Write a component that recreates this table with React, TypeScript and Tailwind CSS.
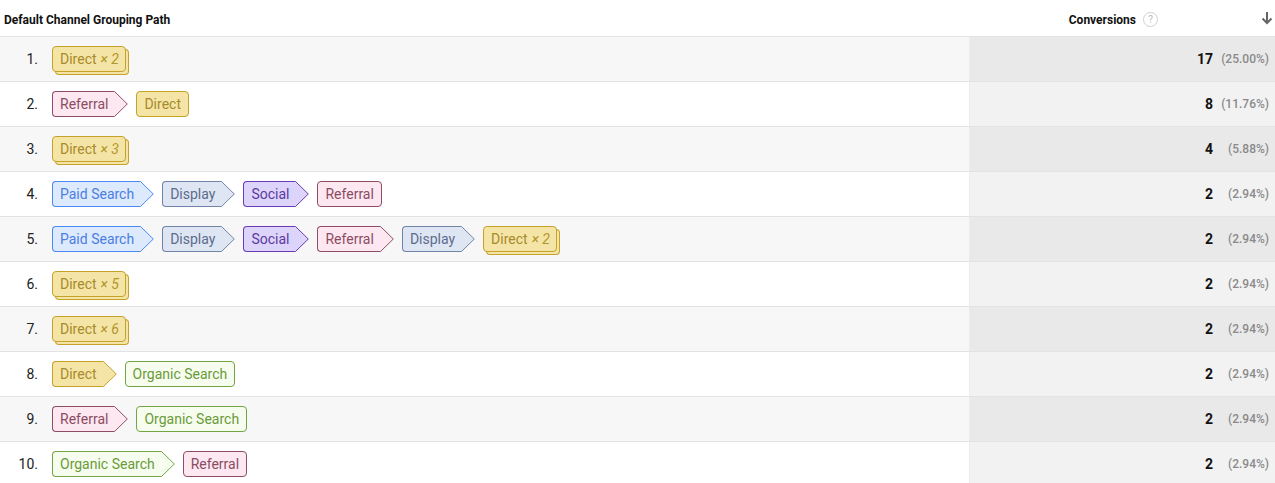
import React from "react";

type Kind = "direct" | "referral" | "paid" | "display" | "social" | "organic";

const STY: Record<Kind, { label: string; bg: string; bd: string; body: string }> = {
  direct: { label: "Direct", bg: "#f4e5a7", bd: "#c6a22a", body: "bg-[#f4e5a7] border-[#c6a22a] text-[#a88a2a]" },
  referral: { label: "Referral", bg: "#fde8f1", bd: "#8e4d65", body: "bg-[#fde8f1] border-[#8e4d65] text-[#8b4c63]" },
  paid: { label: "Paid Search", bg: "#dde9fd", bd: "#4a8af4", body: "bg-[#dde9fd] border-[#4a8af4] text-[#4a7fe0]" },
  display: { label: "Display", bg: "#dfe6f3", bd: "#7283a8", body: "bg-[#dfe6f3] border-[#7283a8] text-[#5b6c8e]" },
  social: { label: "Social", bg: "#ddd4fb", bd: "#6b3bb5", body: "bg-[#ddd4fb] border-[#6b3bb5] text-[#5c3a9d]" },
  organic: { label: "Organic Search", bg: "#f6fdee", bd: "#73a544", body: "bg-[#f6fdee] border-[#73a544] text-[#6a9a3a]" },
};

function Chip({ kind, arrow, count }: { kind: Kind; arrow: boolean; count?: number }) {
  const s = STY[kind];
  if (count) {
    return (
      <div
        className={`h-[26px] flex items-center border rounded-[4px] pl-[7px] pr-[6px] leading-[24px] ${s.body} shadow-[3px_3px_0_-1px_#f4e5a7,3px_3px_0_0_#c6a22a] mr-[3px]`}
      >
        <span>{s.label}</span>
        <span className="italic ml-[4px] text-[#b3952c]">× {count}</span>
      </div>
    );
  }
  if (!arrow) {
    return (
      <div className={`h-[26px] flex items-center border rounded-[4px] px-[7px] leading-[24px] ${s.body}`}>
        {s.label}
      </div>
    );
  }
  return (
    <div className="flex h-[26px]">
      <div className={`h-[26px] flex items-center border-y border-l rounded-l-[4px] pl-[7px] pr-[5px] leading-[24px] ${s.body}`}>
        {s.label}
      </div>
      <svg width="15" height="26" viewBox="0 0 15 26" className="block">
        <path d="M0 0.5 L1.5 0.5 L14.3 13 L1.5 25.5 L0 25.5 Z" fill={s.bg} />
        <polyline points="0,0.5 1.5,0.5 14.3,13 1.5,25.5 0,25.5" fill="none" stroke={s.bd} strokeWidth="1" />
      </svg>
    </div>
  );
}

type Step = { k: Kind; n?: number };
const rows: { path: Step[]; conv: string; pct: string }[] = [
  { path: [{ k: "direct", n: 2 }], conv: "17", pct: "(25.00%)" },
  { path: [{ k: "referral" }, { k: "direct" }], conv: "8", pct: "(11.76%)" },
  { path: [{ k: "direct", n: 3 }], conv: "4", pct: "(5.88%)" },
  { path: [{ k: "paid" }, { k: "display" }, { k: "social" }, { k: "referral" }], conv: "2", pct: "(2.94%)" },
  {
    path: [{ k: "paid" }, { k: "display" }, { k: "social" }, { k: "referral" }, { k: "display" }, { k: "direct", n: 2 }],
    conv: "2",
    pct: "(2.94%)",
  },
  { path: [{ k: "direct", n: 5 }], conv: "2", pct: "(2.94%)" },
  { path: [{ k: "direct", n: 6 }], conv: "2", pct: "(2.94%)" },
  { path: [{ k: "direct" }, { k: "organic" }], conv: "2", pct: "(2.94%)" },
  { path: [{ k: "referral" }, { k: "organic" }], conv: "2", pct: "(2.94%)" },
  { path: [{ k: "organic" }, { k: "referral" }], conv: "2", pct: "(2.94%)" },
];

export default function App() {
  return (
    <div className="w-[1275px] h-[483px] overflow-hidden bg-white text-[#222] font-['Roboto',_'Liberation_Sans',_sans-serif]">
      {/* header */}
      <div className="flex h-[37px] border-b border-[#e3e3e3] pt-[3px]">
        <div className="flex-1 flex items-center pl-[4px] text-[12px] font-bold text-[#111]">
          Default Channel Grouping Path
        </div>
        <div className="w-[306px] flex items-center justify-end text-[12px] font-bold text-[#111]">
          <span>Conversions</span>
          <span className="ml-[7px] w-[15px] h-[15px] rounded-full border border-[#d0d0d0] flex items-center justify-center text-[10px] font-normal text-[#bbb]">
            ?
          </span>
          <svg width="12" height="14" viewBox="0 0 12 14" className="ml-[103px] mr-[2px] mt-[-4px]">
            <path d="M6 1 V12 M1.5 7.5 L6 12 L10.5 7.5" fill="none" stroke="#666" strokeWidth="2" />
          </svg>
        </div>
      </div>
      {rows.map((r, i) => {
        const odd = i % 2 === 0;
        return (
          <div key={i} className="flex h-[45px] border-b border-[#e3e3e3]">
            <div className={`flex-1 flex items-center text-[14px] ${odd ? "bg-[#f7f7f7]" : "bg-white"}`}>
              <div className="w-[38px] text-right text-[#222]">{i + 1}.</div>
              <div className="flex items-center gap-[8px] ml-[14px] mt-[-1px]">
                {r.path.map((s, j) => (
                  <Chip key={j} kind={s.k} count={s.n} arrow={j < r.path.length - 1} />
                ))}
              </div>
            </div>
            <div
              className={`w-[306px] flex items-center justify-end pr-[6px] border-l border-[#ececec] ${
                odd ? "bg-[#e9e9e9]" : "bg-[#f2f2f2]"
              }`}
            >
              <span className="text-[14px] font-bold text-[#111]">{r.conv}</span>
              <span className="w-[56px] text-right text-[12px] font-medium text-[#8a8a8a]">{r.pct}</span>
            </div>
          </div>
        );
      })}
    </div>
  );
}
